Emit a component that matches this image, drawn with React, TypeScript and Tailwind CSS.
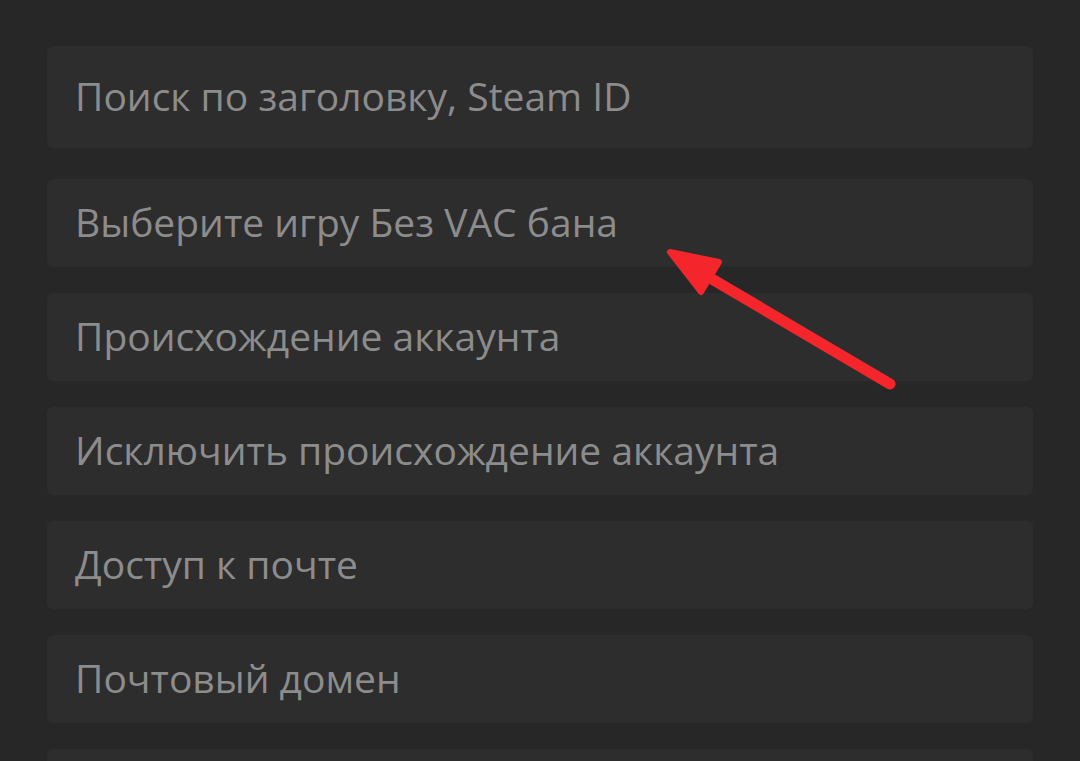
const fields = [
  { label: "Поиск по заголовку, Steam ID", tall: true },
  { label: "Выберите игру Без VAC бана" },
  { label: "Происхождение аккаунта" },
  { label: "Исключить происхождение аккаунта" },
  { label: "Доступ к почте" },
  { label: "Почтовый домен" },
  { label: "" },
];

export default function App() {
  return (
    <div className="relative h-[761px] w-[1080px] overflow-hidden bg-[#272727] font-['Open_Sans',sans-serif]">
      <div className="flex flex-col pl-[47px] pr-[47px] pt-[46px]">
        {fields.map((f, i) => (
          <div
            key={i}
            className={
              f.tall
                ? "mb-[31px] flex h-[102px] items-center rounded-md bg-[#2d2d2d] pb-1 pl-[28px]"
                : "mb-[26px] flex h-[88px] items-center rounded-md bg-[#2d2d2d] pb-1 pl-[28px]"
            }
          >
            <span className="text-[39px] leading-none text-[#8c8c8c]">{f.label}</span>
          </div>
        ))}
      </div>

      {/* red annotation arrow */}
      <svg
        className="pointer-events-none absolute left-0 top-0"
        width="1080"
        height="761"
        viewBox="0 0 1080 761"
      >
        <line x1="890" y1="384" x2="700" y2="272" stroke="#f5262b" strokeWidth="11" strokeLinecap="round" />
        <path
          d="M670 252 L719 262 L701 292 Z"
          fill="#f5262b"
          stroke="#f5262b"
          strokeWidth="6"
          strokeLinejoin="round"
        />
      </svg>
    </div>
  );
}
